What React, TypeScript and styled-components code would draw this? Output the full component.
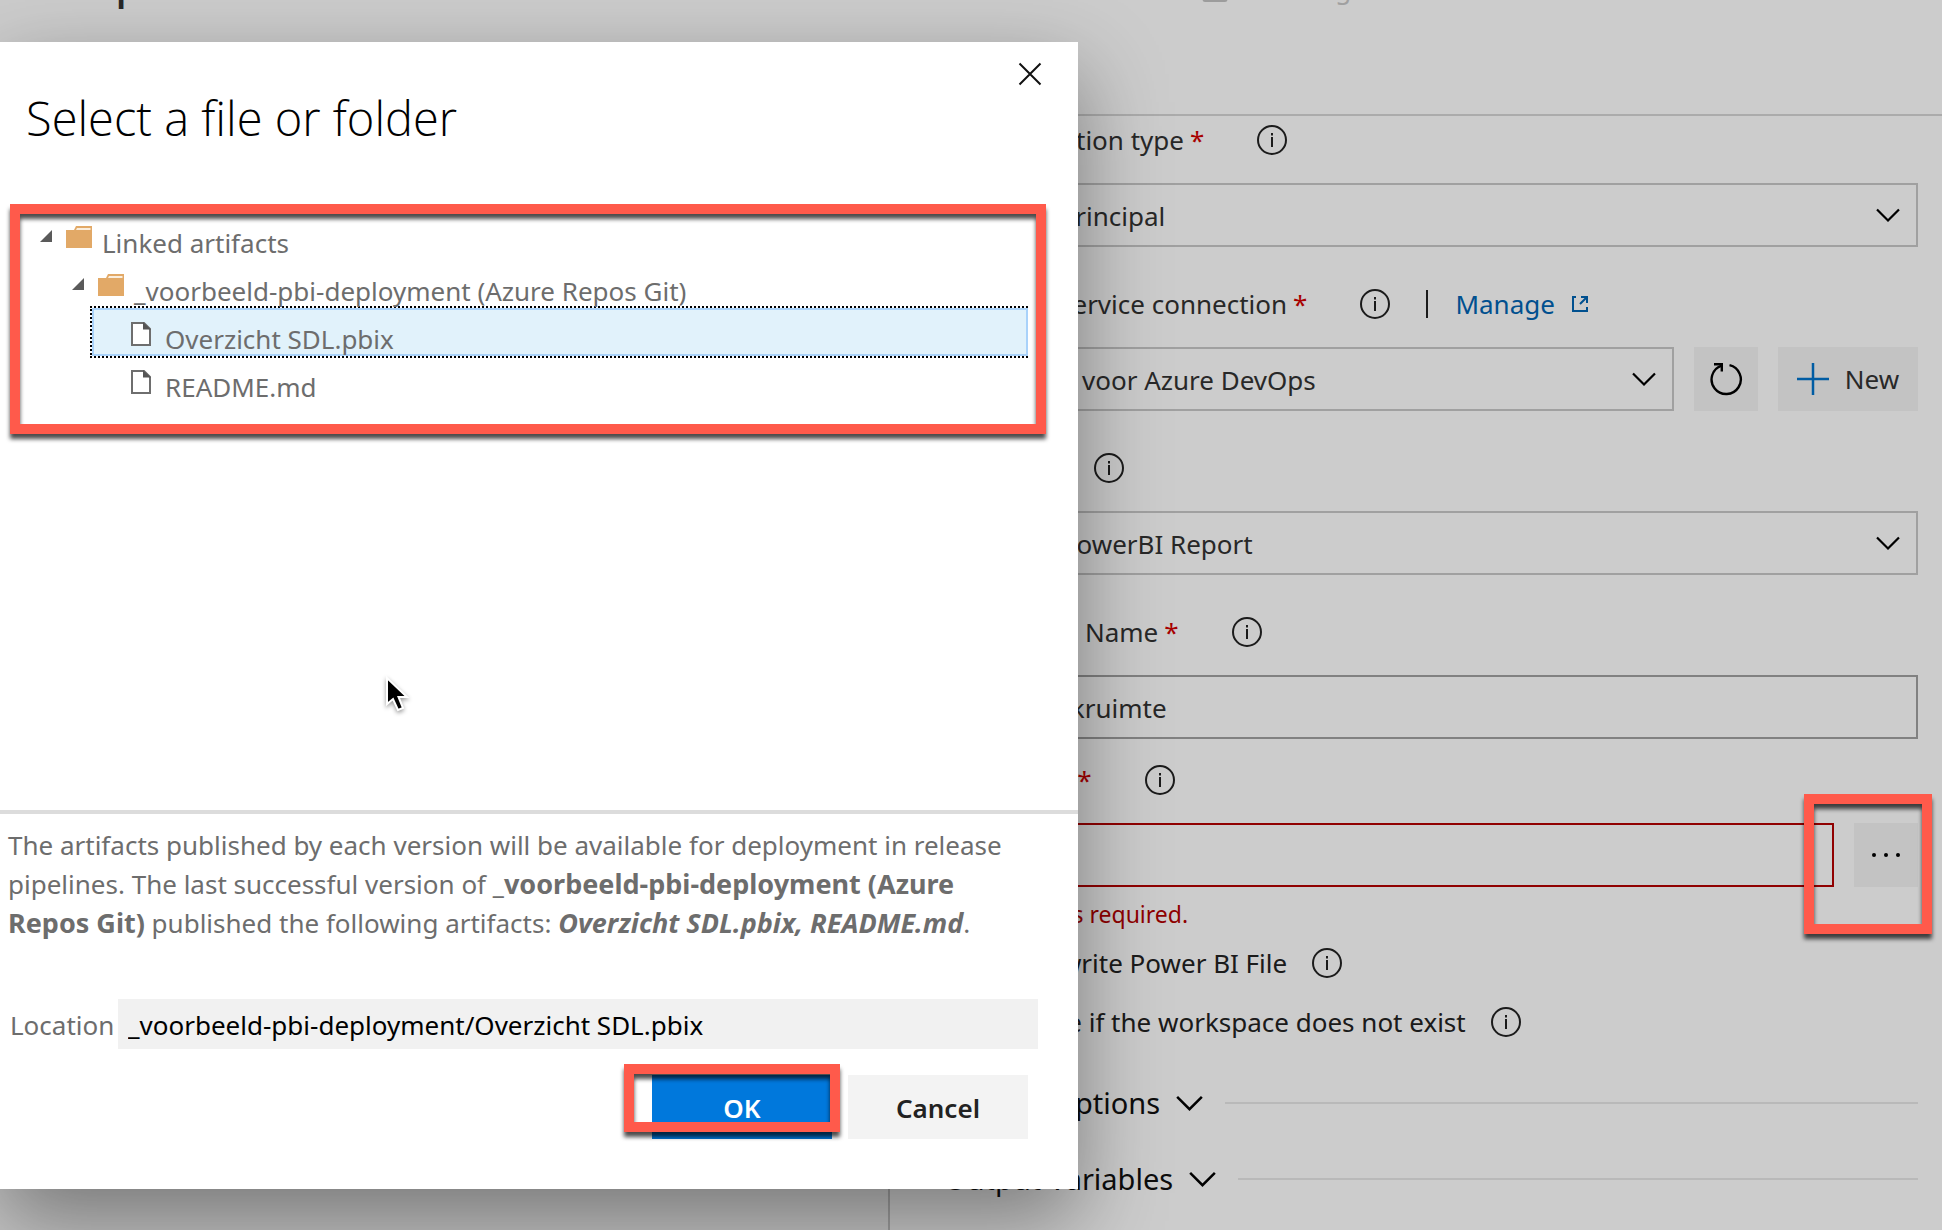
import React from "react";
import styled, { createGlobalStyle, css } from "styled-components";

const GlobalStyle = createGlobalStyle`
  *, *::before, *::after { box-sizing: border-box; }
  body {
    margin: 0;
    background: #fff;
    color: #333;
    font-family: "Segoe UI", "Noto Sans", "Open Sans", sans-serif;
    font-size: 26px;
    line-height: 36px;
    overflow: hidden;
  }
  button, input, select { font: inherit; color: inherit; margin: 0; border-radius: 0; }
`;

/* ---------- page ---------- */

const Page = styled.div`
  position: relative;
  display: flex;
  flex-direction: column;
  min-height: 100vh;
  overflow: hidden;
`;

const Header = styled.header`
  display: grid;
  grid-template-columns: 1202px minmax(0, 1fr);
  align-items: start;
  align-content: start;
  height: 149px;
  margin-top: -33px;
  border-bottom: 2px solid #d6d6d6;
`;

const PageTitle = styled.h1`
  margin: 0;
  padding-left: 8px;
  font-size: 36px;
  line-height: 40px;
  font-weight: 600;
`;

const HeaderStatus = styled.span`
  display: flex;
  align-items: center;
  gap: 20px;
  height: 44px;
  color: #c8c8c8;
`;

const Columns = styled.div`
  flex: 1;
  display: grid;
  grid-template-columns: 890px minmax(0, 1fr);
`;

const TaskList = styled.aside`
  background: #f8f8f8;
  border-right: 2px solid #c8c8c8;
`;

const Form = styled.form`
  display: flex;
  flex-direction: column;
  padding: 0 24px 0 54px;
`;

const Field = styled.div<{ $gap?: number }>`
  display: flex;
  flex-direction: column;
  gap: 19px;
  margin-bottom: ${(p) => p.$gap ?? 33}px;
`;

const LabelRow = styled.div`
  display: flex;
  align-items: center;
  height: 48px;
`;

const Required = styled.span`
  margin-left: 6px;
  color: #d20000;
`;

const InfoButton = styled.button<{ $gap: number }>`
  display: flex;
  width: 32px;
  height: 32px;
  margin-left: ${(p) => p.$gap}px;
  padding: 0;
  border: 0;
  background: none;
  color: #222;
`;

const Separator = styled.span`
  width: 2px;
  height: 28px;
  margin: 0 27px 0 35px;
  background: #222;
`;

const ManageLink = styled.a`
  display: flex;
  align-items: center;
  gap: 16px;
  color: #0064b3;
  text-decoration: none;
`;

const ControlRow = styled.div`
  display: flex;
  gap: 20px;
`;

const SelectBox = styled.div`
  position: relative;
  flex: 1;
  svg {
    position: absolute;
    right: 18px;
    top: 24px;
    pointer-events: none;
  }
`;

const control = css`
  display: block;
  width: 100%;
  height: 64px;
  padding: 2px 20px 0;
  background: #fff;
  outline: none;
`;

const Select = styled.select`
  ${control}
  appearance: none;
  border: 2px solid #c8c8c8;
`;

const TextInput = styled.input<{ $invalid?: boolean }>`
  ${control}
  border: 2px solid ${(p) => (p.$invalid ? "#b40000" : "#a2a2a2")};
`;

const ToolButton = styled.button<{ $wide?: boolean }>`
  display: flex;
  flex: none;
  align-items: center;
  justify-content: center;
  gap: 16px;
  width: ${(p) => (p.$wide ? 140 : 64)}px;
  height: 64px;
  padding: 0;
  border: 0;
  background: #f4f4f4;
`;

const ErrorText = styled.p`
  margin: 9px 0 7px;
  color: #b30000;
  font-size: 23px;
  line-height: 36px;
`;

const CheckRow = styled.div`
  display: flex;
  align-items: center;
  height: 48px;
  margin-bottom: 11px;
  color: #222;
  label { display: flex; align-items: center; gap: 30px; }
  input { width: 28px; height: 28px; }
`;

const Sections = styled.div`
  display: flex;
  flex-direction: column;
  padding-top: 8px;
`;

const Section = styled.button`
  display: flex;
  align-items: center;
  gap: 16px;
  height: 76px;
  padding: 0;
  border: 0;
  background: none;
  color: #111;
  font-size: 29px;
  text-align: left;
  &::after {
    content: "";
    flex: 1;
    height: 2px;
    margin-left: 6px;
    background: #e8e8e8;
  }
`;

/* ---------- dialog ---------- */

const Backdrop = styled.div`
  position: absolute;
  inset: 0;
  padding-top: 42px;
  background: rgba(0, 0, 0, 0.2);
`;

const Dialog = styled.section`
  position: relative;
  width: 1078px;
  padding-bottom: 50px;
  background: #fff;
  box-shadow: 0 32px 80px rgba(0, 0, 0, 0.4);
`;

const CloseButton = styled.button`
  position: absolute;
  top: 18px;
  right: 34px;
  display: flex;
  padding: 0;
  border: 0;
  background: none;
`;

const DialogTitle = styled.h2`
  margin: 0;
  padding: 44px 26px 62px;
  color: #000;
  font-family: "Segoe UI", "Open Sans", sans-serif;
  font-size: 47px;
  line-height: 64px;
  font-weight: 300;
`;

const Tree = styled.ul`
  height: 598px;
  margin: 0;
  padding: 0 50px 0 40px;
  list-style: none;
  color: #6d6d6d;
`;

const TreeItem = styled.li<{ $level: number; $selected?: boolean }>`
  display: flex;
  align-items: center;
  height: 48px;
  margin-left: ${(p) => (p.$level === 2 ? 52 : p.$level * 32)}px;
  padding-left: ${(p) => (p.$level === 2 ? 38 : 0)}px;
  ${(p) =>
    p.$selected &&
    css`
      height: 52px;
      margin-top: -2px;
      margin-bottom: -2px;
      margin-left: 50px;
      border: 2px dotted #000;
      border-right: 0;
      background: #e1f2fb;
      background-clip: padding-box;
      box-shadow: inset 0 0 0 2px #a9d2fa;
    `}
`;

const Twisty = styled.button`
  display: flex;
  margin-right: 14px;
  padding: 0;
  border: 0;
  background: none;
`;

const ItemText = styled.span<{ $file?: boolean }>`
  margin-left: ${(p) => (p.$file ? 13 : 10)}px;
  padding-top: 13px;
`;

const Summary = styled.p`
  margin: 0;
  padding: 12px 56px 0 8px;
  border-top: 4px solid #dcdcdc;
  color: #6d6d6d;
  line-height: 39px;
  b { font-size: 27px; line-height: 36px; }
`;

const LocationRow = styled.div`
  display: flex;
  align-items: center;
  margin: 56px 40px 26px 10px;
  color: #6d6d6d;
  label { width: 108px; padding-top: 2px; }
`;

const LocationInput = styled.input`
  flex: 1;
  height: 50px;
  padding: 2px 10px 0;
  border: 0;
  background: #f1f1f1;
  color: #000;
  outline: none;
`;

const Buttons = styled.div`
  display: flex;
  justify-content: flex-end;
  gap: 16px;
  padding-right: 50px;
`;

const DialogButton = styled.button<{ $primary?: boolean }>`
  width: 180px;
  height: 64px;
  padding: 2px 0 0;
  border: 0;
  background: ${(p) => (p.$primary ? "#0078dc" : "#f3f3f3")};
  color: ${(p) => (p.$primary ? "#fff" : "#222")};
  font-weight: 600;
`;

/* ---------- annotations ---------- */

const Marker = styled.div<{ $x: number; $y: number; $w: number; $h: number }>`
  position: absolute;
  left: ${(p) => p.$x}px;
  top: ${(p) => p.$y}px;
  width: ${(p) => p.$w}px;
  height: ${(p) => p.$h}px;
  border: 10px solid #ff5a4b;
  filter: drop-shadow(0 5px 2px rgba(0, 0, 0, 0.7));
  pointer-events: none;
`;

const Pointer = styled.svg`
  position: absolute;
  left: 384px;
  top: 674px;
  filter: drop-shadow(0 2px 2px rgba(0, 0, 0, 0.4));
`;

/* ---------- icons ---------- */

const Info = ({ gap = 52 }: { gap?: number }) => (
  <InfoButton type="button" $gap={gap} aria-label="More information">
    <svg width="32" height="32" viewBox="0 0 32 32" fill="none" stroke="currentColor" strokeWidth="2">
      <circle cx="16" cy="16" r="14" />
      <path d="M16 13v10M16 9v2.500" />
    </svg>
  </InfoButton>
);

const Chevron = ({ size = 24 }: { size?: number }) => (
  <svg width={size} height={size * 0.6666} viewBox="0 0 24 16" fill="none" stroke="#000" strokeWidth="2.200">
    <path d="M1 2.500L12 13.500L23 2.500" />
  </svg>
);

const External = () => (
  <svg width="18" height="18" viewBox="0 0 18 18" fill="none" stroke="currentColor" strokeWidth="2">
    <path d="M5 2H2v14h14v-4M10 2h6v6M16 2L9 9" />
  </svg>
);

const Refresh = () => (
  <svg width="34" height="34" viewBox="0 0 34 34" fill="none" stroke="#000" strokeWidth="2.400">
    <path d="M20.500 3.200A14.600 14.600 0 1 1 12.500 3.600" />
    <path d="M5 2.200H12.800V9.500" />
  </svg>
);

const Plus = () => (
  <svg width="32" height="32" viewBox="0 0 32 32" stroke="#0074cc" strokeWidth="2.500">
    <path d="M16 0v32M0 16h32" />
  </svg>
);

const Ellipsis = () => (
  <svg width="30" height="6" viewBox="0 0 30 6">
    <circle cx="3" cy="3" r="2" />
    <circle cx="15" cy="3" r="2" />
    <circle cx="27" cy="3" r="2" />
  </svg>
);

const Triangle = () => (
  <svg width="12" height="14" viewBox="0 0 12 14">
    <path d="M12 1V13H0Z" fill="#5a5a5a" />
  </svg>
);

const Folder = () => (
  <svg width="26" height="24" viewBox="0 0 26 24">
    <path d="M0 6H8L10 2H26V24H0Z" fill="#e2a967" />
    <path d="M11 4H24.500V6H10Z" fill="#fbeedd" />
  </svg>
);

const FileIcon = () => (
  <svg width="22" height="30" viewBox="0 0 22 30">
    <path d="M2 6H14L20 12V28H2Z" fill="#fff" stroke="#6e6e6e" strokeWidth="2" />
    <path d="M13 5L21 12.500H13Z" fill="#555" />
  </svg>
);

const StatusIcon = () => (
  <svg width="26" height="26" viewBox="0 0 26 26" fill="none" stroke="#c4c4c4" strokeWidth="3">
    <rect x="2" y="2" width="22" height="22.500" rx="1" />
  </svg>
);

export default function App() {
  return (
    <Page>
      <GlobalStyle />
      <Header>
        <PageTitle>Test – power bi</PageTitle>
        <HeaderStatus>
          <StatusIcon />
          Running on release tasks
        </HeaderStatus>
      </Header>
      <Columns>
        <TaskList />
        <Form onSubmit={(e) => e.preventDefault()}>
          <Field>
            <LabelRow>
              <label htmlFor="auth">Authentication type</label>
              <Required>*</Required>
              <Info />
            </LabelRow>
            <SelectBox>
              <Select id="auth">
                <option>Service Principal</option>
              </Select>
              <Chevron />
            </SelectBox>
          </Field>
          <Field>
            <LabelRow>
              <label htmlFor="connection">Power BI service connection</label>
              <Required>*</Required>
              <Info />
              <Separator />
              <ManageLink href="#manage">
                Manage
                <External />
              </ManageLink>
            </LabelRow>
            <ControlRow>
              <SelectBox>
                <Select id="connection">
                  <option>Power BI voor Azure DevOps</option>
                </Select>
                <Chevron />
              </SelectBox>
              <ToolButton type="button" aria-label="Refresh">
                <Refresh />
              </ToolButton>
              <ToolButton type="button" $wide>
                <Plus />
                New
              </ToolButton>
            </ControlRow>
          </Field>
          <Field>
            <LabelRow>
              <label htmlFor="action">Action</label>
              <Required>*</Required>
              <Info />
            </LabelRow>
            <SelectBox>
              <Select id="action">
                <option>Upload PowerBI Report</option>
              </Select>
              <Chevron />
            </SelectBox>
          </Field>
          <Field $gap={17}>
            <LabelRow>
              <label htmlFor="workspace">Workspace Name</label>
              <Required>*</Required>
              <Info />
            </LabelRow>
            <TextInput id="workspace" defaultValue="DEV Werkruimte" />
          </Field>
          <Field $gap={0}>
            <LabelRow>
              <label htmlFor="source">Source file</label>
              <Required>*</Required>
              <Info />
            </LabelRow>
            <ControlRow>
              <TextInput id="source" $invalid defaultValue="" />
              <ToolButton type="button" aria-label="Browse">
                <Ellipsis />
              </ToolButton>
            </ControlRow>
          </Field>
          <ErrorText>Source File is required.</ErrorText>
          <CheckRow>
            <label>
              <input type="checkbox" />
              Overwrite Power BI File
            </label>
            <Info gap={24} />
          </CheckRow>
          <CheckRow>
            <label>
              <input type="checkbox" />
              Create if the workspace does not exist
            </label>
            <Info gap={24} />
          </CheckRow>
          <Sections>
            <Section type="button">
              Control Options
              <Chevron size={27} />
            </Section>
            <Section type="button">
              Output Variables
              <Chevron size={27} />
            </Section>
          </Sections>
        </Form>
      </Columns>

      <Backdrop>
        <Dialog role="dialog" aria-labelledby="dialog-title">
          <CloseButton type="button" aria-label="Close">
            <svg width="28" height="28" viewBox="0 0 28 28" stroke="#111" strokeWidth="2">
              <path d="M3.500 3.500L24.500 24.500M24.500 3.500L3.500 24.500" />
            </svg>
          </CloseButton>
          <DialogTitle id="dialog-title">Select a file or folder</DialogTitle>
          <Tree>
            <TreeItem $level={0}>
              <Twisty type="button" aria-label="Collapse">
                <Triangle />
              </Twisty>
              <Folder />
              <ItemText>Linked artifacts</ItemText>
            </TreeItem>
            <TreeItem $level={1}>
              <Twisty type="button" aria-label="Collapse">
                <Triangle />
              </Twisty>
              <Folder />
              <ItemText>_voorbeeld-pbi-deployment (Azure Repos Git)</ItemText>
            </TreeItem>
            <TreeItem $level={2} $selected>
              <FileIcon />
              <ItemText $file>Overzicht SDL.pbix</ItemText>
            </TreeItem>
            <TreeItem $level={2}>
              <FileIcon />
              <ItemText $file>README.md</ItemText>
            </TreeItem>
          </Tree>
          <Summary>
            The artifacts published by each version will be available for deployment in release pipelines. The last
            successful version of <b>_voorbeeld-pbi-deployment (Azure Repos Git)</b> published the following artifacts:{" "}
            <b>
              <i>Overzicht SDL.pbix, README.md</i>
            </b>
            .
          </Summary>
          <LocationRow>
            <label htmlFor="location">Location</label>
            <LocationInput id="location" defaultValue="_voorbeeld-pbi-deployment/Overzicht SDL.pbix" />
          </LocationRow>
          <Buttons>
            <DialogButton type="button" $primary>
              OK
            </DialogButton>
            <DialogButton type="button">Cancel</DialogButton>
          </Buttons>
        </Dialog>
      </Backdrop>

      <Marker $x={10} $y={204} $w={1036} $h={230} />
      <Marker $x={624} $y={1064} $w={216} $h={68} />
      <Marker $x={1804} $y={794} $w={128} $h={140} />
      <Pointer width="28" height="40" viewBox="0 0 28 40">
        <path d="M3 4V30L9 25L14 36L19 34L14.500 23H23Z" fill="#000" stroke="#fff" strokeWidth="2" />
      </Pointer>
    </Page>
  );
}
